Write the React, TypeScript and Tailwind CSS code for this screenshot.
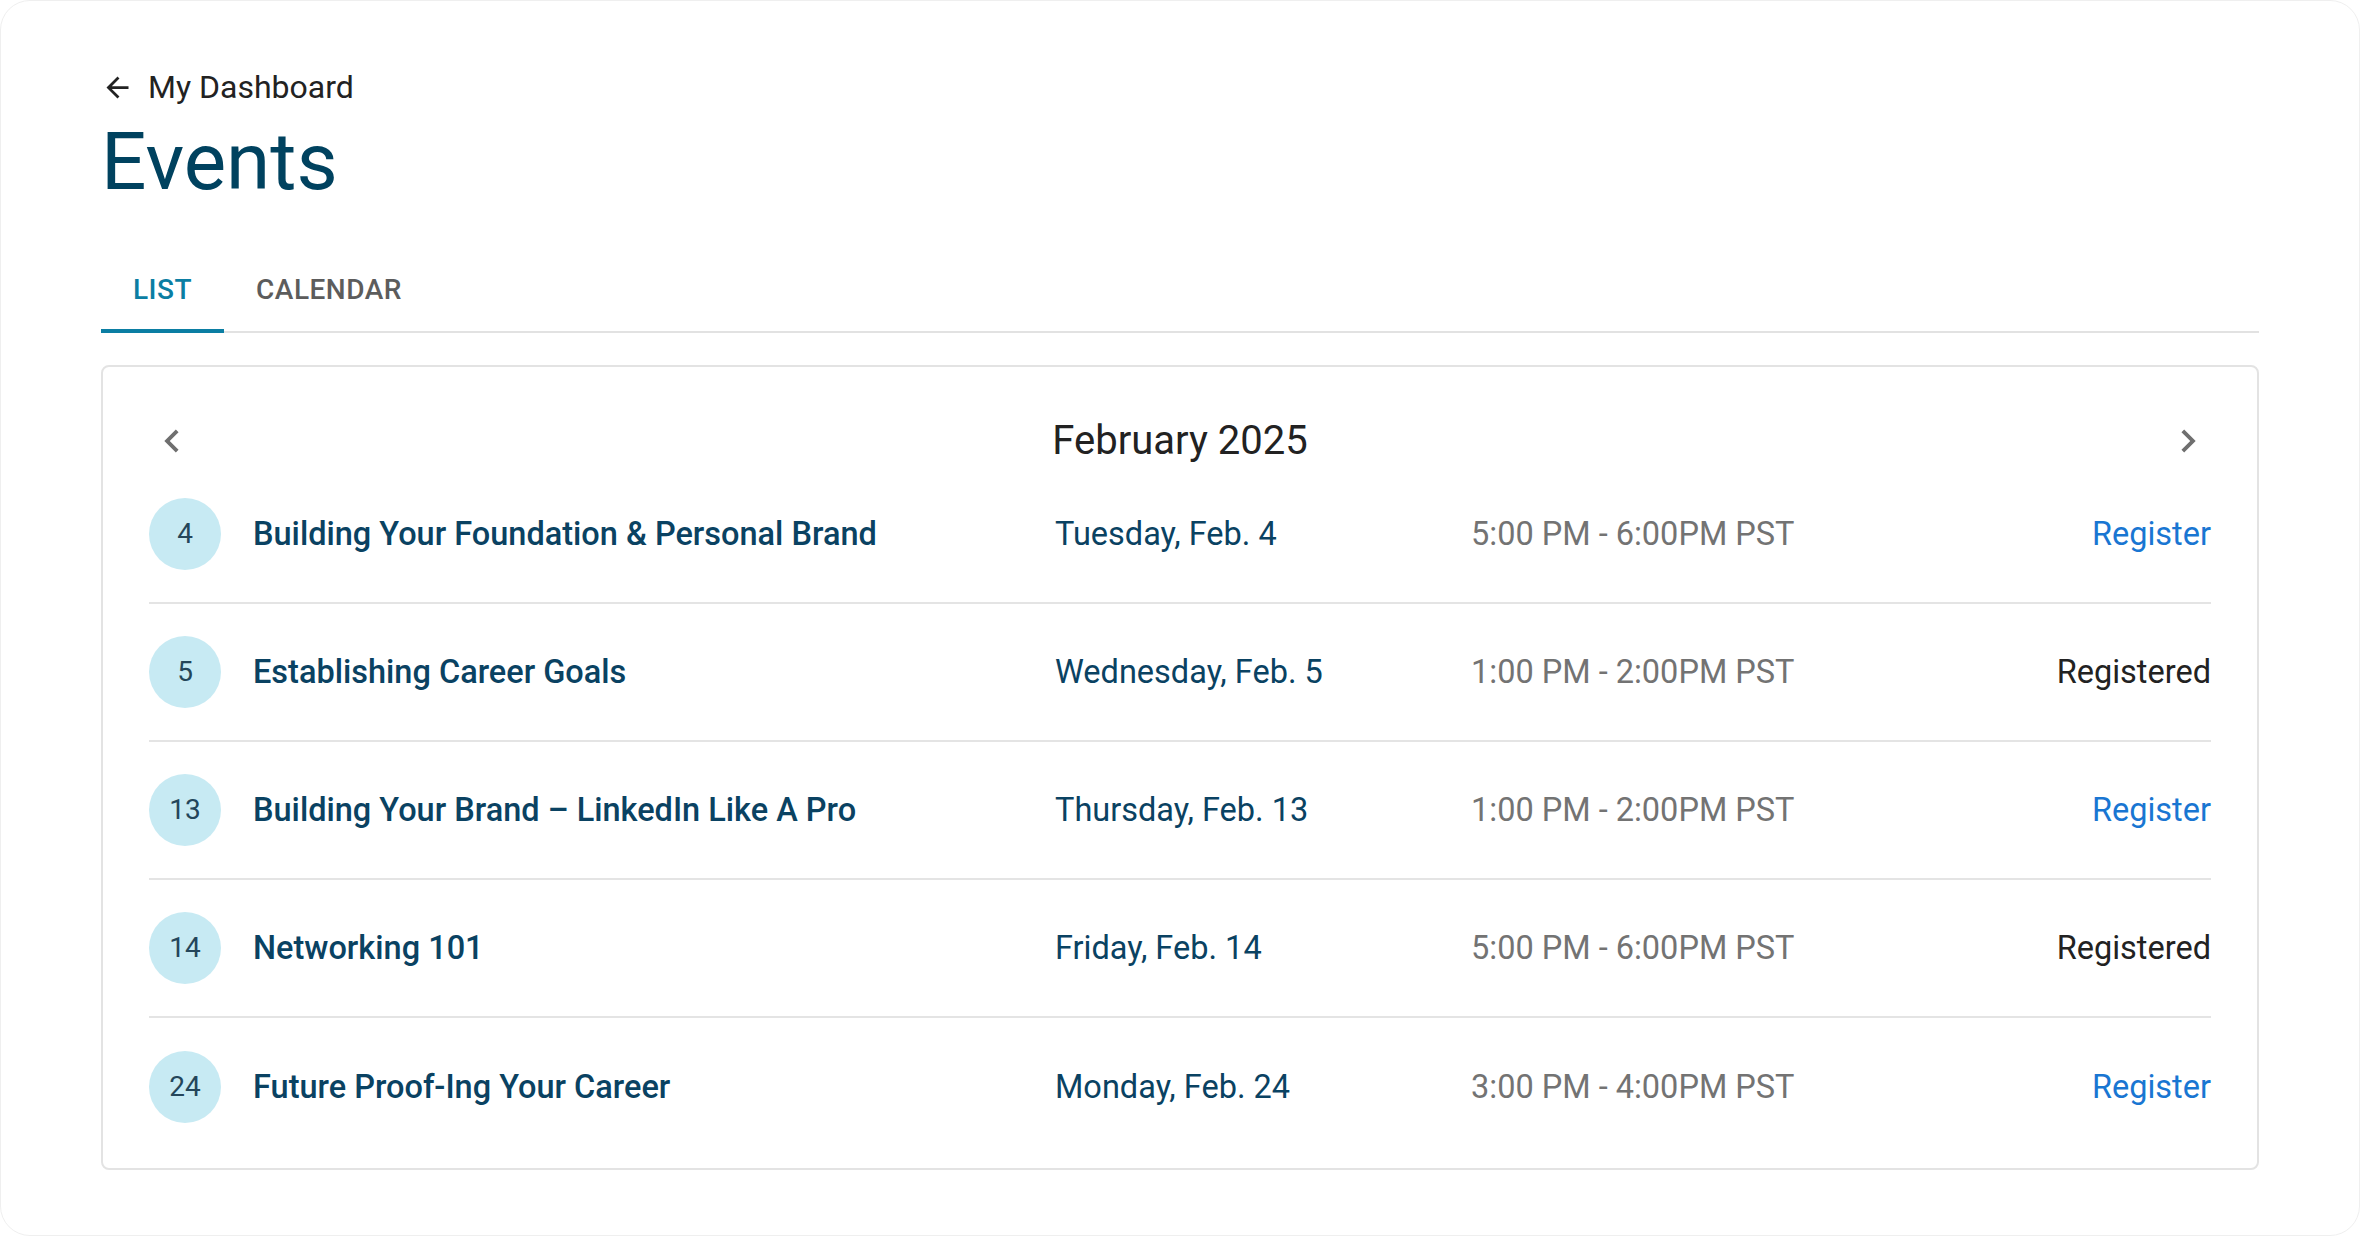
import { useState } from "react";

type EventRow = {
  day: number;
  title: string;
  date: string;
  time: string;
  registered: boolean;
};

const events: EventRow[] = [
  { day: 4,  title: "Building Your Foundation & Personal Brand", date: "Tuesday, Feb. 4",    time: "5:00 PM - 6:00PM PST", registered: false },
  { day: 5,  title: "Establishing Career Goals",                 date: "Wednesday, Feb. 5",  time: "1:00 PM - 2:00PM PST", registered: true  },
  { day: 13, title: "Building Your Brand – LinkedIn Like A Pro", date: "Thursday, Feb. 13",  time: "1:00 PM - 2:00PM PST", registered: false },
  { day: 14, title: "Networking 101",                            date: "Friday, Feb. 14",    time: "5:00 PM - 6:00PM PST", registered: true  },
  { day: 24, title: "Future Proof-Ing Your Career",              date: "Monday, Feb. 24",    time: "3:00 PM - 4:00PM PST", registered: false },
];

function ArrowBack() {
  return (
    <svg width="33" height="33" viewBox="0 0 24 24" fill="#222222" aria-hidden>
      <path d="M20 11H7.83l5.59-5.59L12 4l-8 8 8 8 1.41-1.41L7.83 13H20v-2z" />
    </svg>
  );
}

function Chevron({ dir }: { dir: "left" | "right" }) {
  return (
    <svg width="46" height="46" viewBox="0 0 24 24" fill="#6f6f6f" aria-hidden>
      {dir === "left" ? (
        <path d="M15.41 7.41L14 6l-6 6 6 6 1.41-1.41L10.83 12z" />
      ) : (
        <path d="M10 6L8.59 7.41 13.17 12l-4.58 4.59L10 18l6-6z" />
      )}
    </svg>
  );
}

export default function App() {
  const [tab, setTab] = useState<"list" | "calendar">("list");

  return (
    <div className="w-full h-[1236px] bg-white font-['Roboto',sans-serif]">
      <div className="h-full rounded-[30px] border border-[#efefef] px-[100px] pt-[66px]">
        {/* Header */}
        <button className="flex items-center gap-[14px] h-[40px] text-[32px] leading-[40px] text-[#222222]">
          <ArrowBack />
          <span>My Dashboard</span>
        </button>
        <h1 className="mt-[15px] text-[80px] leading-[80px] text-[#00425f]">Events</h1>

        {/* Tabs */}
        <div className="mt-[49px] flex border-b-2 border-[#e2e2e2]">
          {[
            { id: "list" as const, label: "LIST" },
            { id: "calendar" as const, label: "CALENDAR" },
          ].map((t) => (
            <button
              key={t.id}
              onClick={() => setTab(t.id)}
              className={`h-[82px] px-[32px] -mb-[2px] border-b-4 text-[28px] font-medium tracking-[0.5px] ${
                tab === t.id ? "border-[#0b7ea3] text-[#0b7ea3]" : "border-transparent text-[#5c5c5c]"
              }`}
            >
              {t.label}
            </button>
          ))}
        </div>

        {/* Card */}
        <div className="mt-[32px] rounded-[8px] border-2 border-[#e3e3e3] px-[46px] pt-[48px] pb-[12px]">
          <div className="flex items-center justify-between h-[51px]">
            <button aria-label="Previous month"><Chevron dir="left" /></button>
            <p className="text-[40px] text-[#222222]">February 2025</p>
            <button aria-label="Next month"><Chevron dir="right" /></button>
          </div>

          {events.map((e, i) => (
            <div
              key={e.day}
              className={`flex items-center h-[138px] ${i < events.length - 1 ? "border-b-2 border-[#e4e4e4]" : ""}`}
            >
              <div className="w-[72px] h-[72px] shrink-0 rounded-full bg-[#c7eaf3] flex items-center justify-center text-[28px] text-[#24465a]">
                {e.day}
              </div>
              <p className="ml-[32px] w-[802px] shrink-0 text-[32.5px] font-medium text-[#0a4262]">{e.title}</p>
              <p className="w-[416px] shrink-0 text-[32.5px] text-[#0a4262]">{e.date}</p>
              <p className="text-[32.5px] text-[#737373]">{e.time}</p>
              <div className="ml-auto text-[32.5px]">
                {e.registered ? (
                  <span className="text-[#222222]">Registered</span>
                ) : (
                  <a href="#" className="text-[#1976d2]">Register</a>
                )}
              </div>
            </div>
          ))}
        </div>
      </div>
    </div>
  );
}
